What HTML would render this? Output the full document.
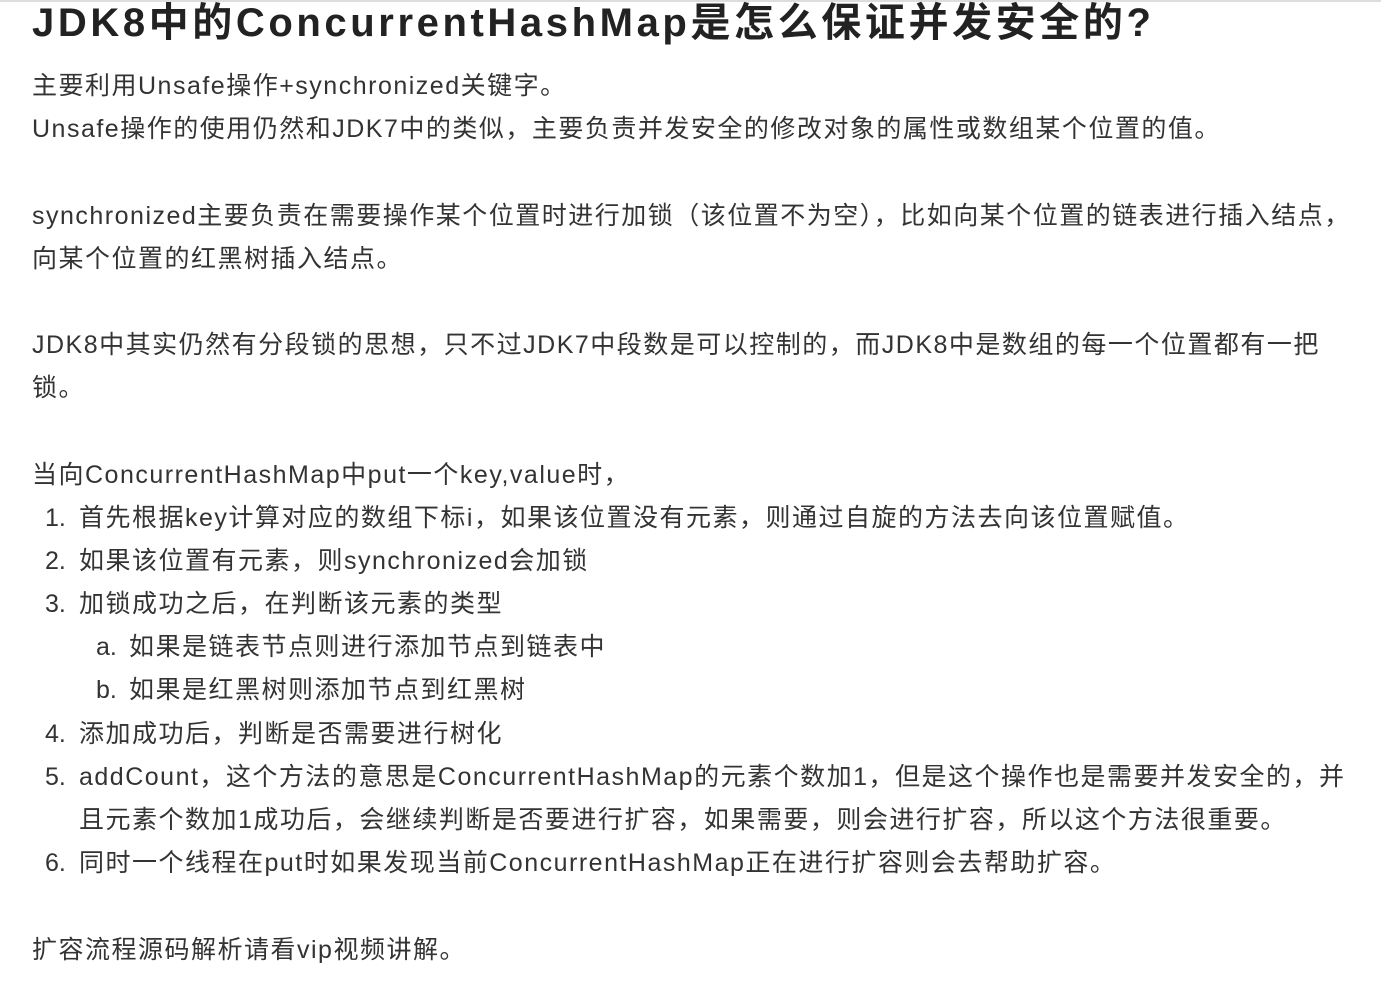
<!DOCTYPE html>
<html><head><meta charset="utf-8"><style>
html,body{margin:0;padding:0;background:#fff;width:1381px;height:981px;overflow:hidden}
body{font-family:"Liberation Sans","Noto Sans CJK SC",sans-serif;color:#333;position:relative}
.t{position:absolute;left:32px;top:-2px;font-size:40px;font-weight:bold;color:#222;letter-spacing:3.6px;white-space:nowrap;line-height:50px}
.l{position:absolute;font-size:25px;letter-spacing:1.5px;white-space:nowrap;line-height:30px}
.n{position:absolute;font-size:25px;white-space:nowrap;line-height:30px}
.top{position:absolute;left:0;top:0;width:1381px;height:2px;background:#ddd}
</style></head><body>
<div class="top"></div>
<div class="t">JDK8中的ConcurrentHashMap是怎么保证并发安全的?</div>
<div class="l" style="left:32px;top:71px">主要利用Unsafe操作+synchronized关键字。</div>
<div class="l" style="left:32px;top:114px">Unsafe操作的使用仍然和JDK7中的类似，主要负责并发安全的修改对象的属性或数组某个位置的值。</div>
<div class="l" style="left:32px;top:201px">synchronized主要负责在需要操作某个位置时进行加锁（该位置不为空），比如向某个位置的链表进行插入结点，</div>
<div class="l" style="left:32px;top:244px">向某个位置的红黑树插入结点。</div>
<div class="l" style="left:32px;top:330px">JDK8中其实仍然有分段锁的思想，只不过JDK7中段数是可以控制的，而JDK8中是数组的每一个位置都有一把</div>
<div class="l" style="left:32px;top:373px">锁。</div>
<div class="l" style="left:32px;top:460px">当向ConcurrentHashMap中put一个key,value时，</div>
<div class="n" style="left:45px;top:503px">1.</div><div class="l" style="left:79px;top:503px">首先根据key计算对应的数组下标i，如果该位置没有元素，则通过自旋的方法去向该位置赋值。</div>
<div class="n" style="left:45px;top:546px">2.</div><div class="l" style="left:79px;top:546px">如果该位置有元素，则synchronized会加锁</div>
<div class="n" style="left:45px;top:589px">3.</div><div class="l" style="left:79px;top:589px">加锁成功之后，在判断该元素的类型</div>
<div class="n" style="left:96px;top:632px">a.</div><div class="l" style="left:129px;top:632px">如果是链表节点则进行添加节点到链表中</div>
<div class="n" style="left:96px;top:675px">b.</div><div class="l" style="left:129px;top:675px">如果是红黑树则添加节点到红黑树</div>
<div class="n" style="left:45px;top:719px">4.</div><div class="l" style="left:79px;top:719px">添加成功后，判断是否需要进行树化</div>
<div class="n" style="left:45px;top:762px">5.</div><div class="l" style="left:79px;top:762px">addCount，这个方法的意思是ConcurrentHashMap的元素个数加1，但是这个操作也是需要并发安全的，并</div>
<div class="l" style="left:79px;top:805px">且元素个数加1成功后，会继续判断是否要进行扩容，如果需要，则会进行扩容，所以这个方法很重要。</div>
<div class="n" style="left:45px;top:848px">6.</div><div class="l" style="left:79px;top:848px">同时一个线程在put时如果发现当前ConcurrentHashMap正在进行扩容则会去帮助扩容。</div>
<div class="l" style="left:32px;top:935px">扩容流程源码解析请看vip视频讲解。</div>
</body></html>
